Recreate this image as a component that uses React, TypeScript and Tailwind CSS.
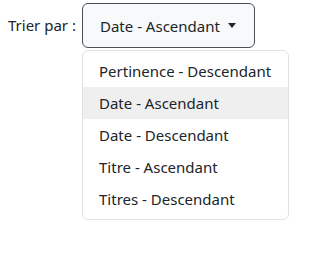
import React, { useState } from "react";

const options = [
  "Pertinence - Descendant",
  "Date - Ascendant",
  "Date - Descendant",
  "Titre - Ascendant",
  "Titres - Descendant",
];

const App: React.FC = () => {
  const [selected, setSelected] = useState("Date - Ascendant");
  const [open, setOpen] = useState(true);

  return (
    <div className="w-[309px] h-[263px] bg-white text-[#212529] font-['Noto_Sans',sans-serif] text-[15px]">
      <div className="flex items-start pl-[8px] pt-[3px]">
        <label className="w-[74px] shrink-0 mt-[10px] leading-[24px]">Trier par :</label>
        <div className="relative">
          <button
            type="button"
            onClick={() => setOpen(!open)}
            className="flex items-center w-[173px] h-[45px] pl-[17px] bg-[#f8f9fa] border border-[#495057] rounded-[6px] leading-[24px]"
          >
            {selected}
            <span className="ml-[8px] w-0 h-0 border-l-[4px] border-r-[4px] border-t-[5px] border-l-transparent border-r-transparent border-t-[#212529]" />
          </button>
          {open && (
            <ul className="absolute left-0 top-[47px] w-[207px] py-[4px] bg-white border border-[#dee2e6] rounded-[6px]">
              {options.map((opt) => (
                <li
                  key={opt}
                  onClick={() => {
                    setSelected(opt);
                    setOpen(false);
                  }}
                  className={`h-[32px] flex items-center px-[16px] whitespace-nowrap cursor-pointer ${
                    opt === selected ? "bg-[#efefef]" : ""
                  }`}
                >
                  {opt}
                </li>
              ))}
            </ul>
          )}
        </div>
      </div>
    </div>
  );
};

export default App;
